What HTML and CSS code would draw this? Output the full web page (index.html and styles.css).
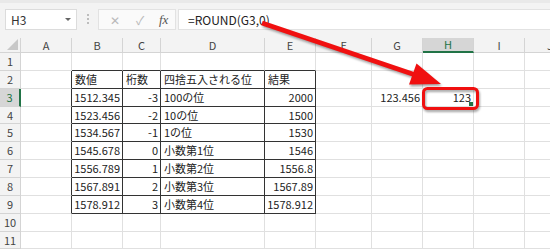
FILE: index.html
```html
<!DOCTYPE html>
<html lang="ja">
<head>
  <meta charset="UTF-8">
  <title>ROUND</title>
  <link rel="stylesheet" href="styles.css">
</head>
<body>
  <div class="toolbar">
    <div class="name-box">H3<span class="drop"></span></div>
    <div class="grip"><i></i><i></i><i></i></div>
    <div class="fx-box">
      <span class="btn">✕</span>
      <span class="btn">✓</span>
      <span class="fx">fx</span>
    </div>
    <div class="formula">=ROUND(G3,0)</div>
  </div>

  <div class="sheet" id="sheet"></div>

  <svg class="marks" width="550" height="250" viewBox="0 0 550 250">
    <line x1="262" y1="23" x2="414" y2="74.5" stroke="#f01010" stroke-width="5"/>
    <polygon points="441,84 409,84.5 416.5,63.5" fill="#f01010"/>
    <rect x="423.5" y="88.5" width="54" height="20" rx="4" fill="none" stroke="#f01010" stroke-width="3"/>
  </svg>

  <script>
    const cols = ['A', 'B', 'C', 'D', 'E', 'F', 'G', 'H', 'I', 'J'];
    // row number -> values for B..E
    const data = {
      2: ['数値', '桁数', '四捨五入される位', '結果'],
      3: ['1512.345', '-3', '100の位', '2000'],
      4: ['1523.456', '-2', '10の位', '1500'],
      5: ['1534.567', '-1', '1の位', '1530'],
      6: ['1545.678', '0', '小数第1位', '1546'],
      7: ['1556.789', '1', '小数第2位', '1556.8'],
      8: ['1567.891', '2', '小数第3位', '1567.89'],
      9: ['1578.912', '3', '小数第4位', '1578.912']
    };
    const sheet = document.getElementById('sheet');

    function addCell(cls, text) {
      const c = document.createElement('div');
      c.className = cls;
      if (text) c.textContent = text;
      sheet.appendChild(c);
    }

    addCell('corner');
    cols.forEach(l => addCell(l === 'H' ? 'col-hdr sel' : 'col-hdr', l));

    for (let r = 1; r <= 11; r++) {
      addCell(r === 3 ? 'row-hdr sel' : 'row-hdr', r);
      cols.forEach((l, i) => {
        let cls = 'cell';
        let text = '';
        const inTable = r >= 2 && r <= 9 && i >= 1 && i <= 4;
        if (inTable) {
          cls += ' box';
          text = data[r][i - 1];
          if (r > 2 && i !== 3) cls += ' num';
        }
        if (r >= 2 && r <= 9 && i === 0) cls += ' box-left';
        if (r === 1 && i >= 1 && i <= 4) cls += ' box-top';
        if (r === 3 && l === 'G') { cls += ' num'; text = '123.456'; }
        if (r === 3 && l === 'H') { cls += ' num active'; text = '123'; }
        addCell(cls, text);
      });
    }
  </script>
</body>
</html>
```

FILE: styles.css
```css
* {
  margin: 0;
  padding: 0;
  box-sizing: border-box;
}
body {
  width: 550px;
  height: 250px;
  overflow: hidden;
  position: relative;
  background: #fff;
  font-family: 'Noto Sans CJK JP', 'Noto Sans', sans-serif;
  color: #222;
}

.toolbar {
  height: 38px;
  background: #f3f3f3;
  border-top: 3px solid #e9e9e9;
  display: flex;
  align-items: flex-start;
  padding: 6px 0 0 5px;
}
.name-box {
  width: 72px;
  height: 21px;
  background: #fff;
  border: 1px solid #dcdcdc;
  font-size: 12px;
  line-height: 19px;
  padding-left: 5px;
  color: #333;
  position: relative;
}
.drop {
  position: absolute;
  right: 5px;
  top: 8px;
  border-left: 3px solid transparent;
  border-right: 3px solid transparent;
  border-top: 3px solid #666;
}
.grip {
  width: 21px;
  display: flex;
  flex-direction: column;
  align-items: center;
  gap: 2px;
  padding-top: 5px;
}
.grip i {
  width: 2px;
  height: 2px;
  background: #bdbdbd;
}
.fx-box {
  width: 78px;
  height: 21px;
  background: #fafafa;
  border: 1px solid #e2e2e2;
  display: flex;
  align-items: center;
  padding-left: 9px;
  gap: 11px;
  font-size: 12px;
}
.btn {
  color: #b9b9b9;
  width: 14px;
  text-align: center;
}
.fx {
  font-family: 'Liberation Serif', serif;
  font-style: italic;
  font-size: 13px;
  color: #555;
  margin-left: 1px;
}
.formula {
  flex: 1;
  height: 21px;
  margin-left: 2px;
  background: #fff;
  border: 1px solid #e2e2e2;
  border-right: none;
  font-size: 12px;
  line-height: 19px;
  padding-left: 9px;
  color: #222;
}

.sheet {
  display: grid;
  grid-template-columns: 21px 51px 51px 38px 104px 51px 56px 51px 51px 51px 51px;
  grid-template-rows: 15px repeat(11, 17.86px);
  font-size: 11px;
}
.corner {
  background: #f3f3f3;
  border-right: 1px solid #d4d4d4;
  border-bottom: 1px solid #d4d4d4;
  position: relative;
}
.corner::after {
  content: '';
  position: absolute;
  right: 2px;
  bottom: 2px;
  border-left: 11px solid transparent;
  border-bottom: 11px solid #c8c8c8;
}
.col-hdr, .row-hdr {
  background: #f3f3f3;
  color: #444;
  border-right: 1px solid #d4d4d4;
  border-bottom: 1px solid #d4d4d4;
  display: flex;
  align-items: center;
  justify-content: center;
  line-height: 1;
}
.col-hdr.sel {
  background: #d6d6d6;
  color: #217346;
  border-bottom: 2px solid #217346;
}
.row-hdr.sel {
  background: #d6d6d6;
  color: #217346;
  border-right: 2px solid #217346;
}
.cell {
  border-right: 1px solid #e0e0e0;
  border-bottom: 1px solid #e0e0e0;
  display: flex;
  align-items: center;
  padding: 0 2px 0 3px;
  white-space: nowrap;
  overflow: hidden;
  line-height: 1;
}
.cell.num {
  justify-content: flex-end;
}
.cell.box {
  border-right-color: #333;
  border-bottom-color: #333;
}
.cell.box-left {
  border-right-color: #333;
}
.cell.box-top {
  border-bottom-color: #333;
}
.cell.active {
  position: relative;
}
.cell.active::after {
  content: '';
  position: absolute;
  right: 0;
  bottom: 0;
  width: 4px;
  height: 4px;
  background: #217346;
}

.marks {
  position: absolute;
  left: 0;
  top: 0;
  pointer-events: none;
  filter: drop-shadow(1px 2px 1px rgba(0, 0, 0, 0.35));
}
```
